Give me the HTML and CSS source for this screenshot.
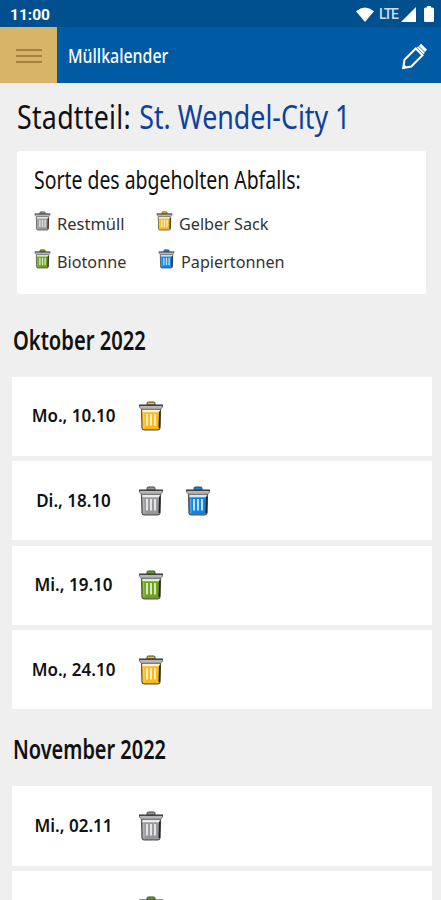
FILE: index.html
```html
<!DOCTYPE html>
<html lang="de">
<head>
<meta charset="utf-8">
<title>Müllkalender</title>
<link rel="stylesheet" href="styles.css">
</head>
<body>
<svg class="defs" aria-hidden="true">
  <symbol id="bin" viewBox="0 0 26 30">
    <path d="M9 4V2.200Q9 1 10.300 1h5.400Q17 1 17 2.200V4z" fill="currentColor" stroke="#444" stroke-width="1"/>
    <path d="M3.500 8.500h19L22 27q-.1 1.800-2 1.800H6q-1.900 0-2-1.800z" fill="currentColor" stroke="#555" stroke-width="1.200"/>
    <path d="M4.300 8.500h17.400v2.800h-17.400z" fill="#fff" opacity=".8"/>
    <path d="M5.700 12.500l.3 14.500" stroke="#fff" stroke-width="1" opacity=".4"/>
    <path d="M21.800 10.500L21.300 27" stroke="#222" stroke-width="1.600"/>
    <path d="M9 13v11.500M13 13v11.500M17 13v11.500" stroke="#fff" stroke-width="2.100" opacity=".75"/>
    <path d="M1.500 4.200h23v2.100l-2.200 1.900H3.700L1.500 6.300z" fill="#b4b6ba" stroke="#666" stroke-width=".9"/>
    <path d="M1 4.200h24" stroke="#333" stroke-width="1.200"/>
  </symbol>
</svg>

<div class="status">
  <span class="clock">11:00</span>
  <svg class="wifi" viewBox="0 0 18 15"><path d="M0 4.200Q9-3.200 18 4.200L9 15z"/></svg>
  <span class="lte">LTE</span>
  <svg class="signal" viewBox="0 0 15 15"><path d="M15 0v15H0z"/></svg>
  <svg class="battery" viewBox="0 0 10 16"><path d="M3 0h4v1.500h1.500Q10 1.500 10 3v11.500Q10 16 8.500 16h-7Q0 16 0 14.500V3Q0 1.500 1.500 1.500H3z"/></svg>
</div>

<header class="bar">
  <div class="menu"><i></i><i></i><i></i></div>
  <span class="bar-title">Müllkalender</span>
  <svg class="pencil" viewBox="0 0 27 27">
    <path d="M2.200 25l1.300-8.200L14.800 5.500l6.700 6.700L10.200 23.500z"/>
    <path class="solid" d="M2 25.200l.7-4.400 3.700 3.700z"/>
    <path d="M16.600 3.900l6.600 6.600"/>
    <path class="end" d="M19 1.900l6 6"/>
  </svg>
</header>

<main>
  <h1><span class="district">Stadtteil: <b>St. Wendel-City 1</b></span></h1>

  <section class="legend">
    <h2><span>Sorte des abgeholten Abfalls:</span></h2>
    <div class="legend-row">
      <div class="kind first"><svg class="gray"><use href="#bin"/></svg><span class="slightly-wide">Restmüll</span></div>
      <div class="kind"><svg class="yellow"><use href="#bin"/></svg><span>Gelber Sack</span></div>
    </div>
    <div class="legend-row">
      <div class="kind first wide"><svg class="green"><use href="#bin"/></svg><span>Biotonne</span></div>
      <div class="kind"><svg class="blue"><use href="#bin"/></svg><span>Papiertonnen</span></div>
    </div>
  </section>

  <h3><span class="okt">Oktober 2022</span></h3>
  <div class="days">
    <div class="day"><time>Mo., 10.10</time><svg class="yellow"><use href="#bin"/></svg></div>
    <div class="day"><time>Di., 18.10</time><svg class="gray"><use href="#bin"/></svg><svg class="blue"><use href="#bin"/></svg></div>
    <div class="day"><time>Mi., 19.10</time><svg class="green"><use href="#bin"/></svg></div>
    <div class="day"><time>Mo., 24.10</time><svg class="yellow"><use href="#bin"/></svg></div>
  </div>

  <h3><span class="nov">November 2022</span></h3>
  <div class="days">
    <div class="day"><time>Mi., 02.11</time><svg class="gray"><use href="#bin"/></svg></div>
    <div class="day"><time></time><svg class="green"><use href="#bin"/></svg></div>
  </div>
</main>
</body>
</html>
```
FILE: styles.css
```css
* { box-sizing: border-box; }
html, body { margin: 0; height: 900px; overflow: hidden; }
body {
  background: #efefef;
  color: #111;
  font-family: "Noto Sans", "Open Sans", sans-serif;
}
main { height: 817px; overflow: hidden; }
svg { display: block; flex: none; }
.defs { position: absolute; width: 0; height: 0; }

.gray { color: #98989c; }
.yellow { color: #fbb914; }
.green { color: #6aa315; }
.blue { color: #0b83e8; }

.status {
  display: flex;
  align-items: center;
  height: 27px;
  padding: 1px 7px 0 10px;
  background: #004f8e;
  color: #fff;
}
.status svg { fill: #fff; }
.clock {
  margin: 2px auto 0 0;
  font: 700 15.500px/26px Roboto, sans-serif;
}
.wifi { width: 18px; height: 15px; margin-right: 5px; }
.lte {
  width: 20px;
  margin-right: 2px;
  font: 500 14px/26px Roboto, sans-serif;
  letter-spacing: -1.200px;
  color: #cfdfef;
}
.signal { width: 15px; height: 15px; margin-right: 8px; }
.battery { width: 10px; height: 16px; }

.bar {
  display: flex;
  align-items: center;
  height: 56px;
  padding-right: 13px;
  background: #005ba4;
  color: #fff;
}
.menu {
  display: flex;
  flex-direction: column;
  align-items: center;
  justify-content: center;
  gap: 4px;
  width: 57px;
  height: 56px;
  padding-top: 1px;
  background: #d7b468;
}
.menu i { width: 26px; height: 2px; background: #a3823f; }
.bar-title {
  margin: 2px auto 0 11px;
  font-size: 20px;
  font-weight: 500;
  line-height: 28px;
  transform: scaleX(.795);
  transform-origin: left;
}
.pencil { width: 27px; height: 27px; margin-top: 2px; fill: none; stroke: #fff; stroke-width: 2; }
.pencil .solid { fill: #fff; stroke: none; }
.pencil .end { stroke-width: 3; }

h1, h2, h3 { margin: 0; font-weight: 400; white-space: nowrap; }
h1 span, h2 span, h3 span, .kind span { display: inline-block; transform-origin: left; white-space: nowrap; }
h1 { height: 68px; padding: 12px 0 0 17px; font-size: 33px; line-height: 44px; }
h1 span { letter-spacing: .3px; transform: scaleX(.812); }
h1 b { margin-left: 1.500px; font-weight: 400; letter-spacing: 0; color: #0d419c; }

.legend {
  height: 143px;
  margin: 0 15px 0 17px;
  padding: 11px 17px 0;
  background: #fff;
  border-radius: 2px;
}
h2 { height: 42px; font-size: 25px; line-height: 34px; }
h2 span { transform: scaleX(.777); }
.legend-row { display: flex; height: 37.500px; }
.kind { display: flex; height: 37px; padding-top: 7px; }
.kind svg { width: 17px; height: 20px; margin-right: 6px; }
.kind span { font-size: 16px; line-height: 24px; margin-top: 1px; color: #333; transform: scaleX(1.012); }
.kind .slightly-wide { transform: scaleX(1.03); }
.first { width: 122px; }
.wide { width: 124px; }

h3 {
  height: 82.700px;
  padding: 26px 0 0 13px;
  font-size: 27px;
  font-weight: 600;
  line-height: 40px;
}
h3 .okt { transform: scaleX(.746); }
h3 .nov { transform: scaleX(.738); }
.days + h3 { height: 77px; padding-top: 20px; }

.days { display: flex; flex-direction: column; gap: 5.200px; padding: 0 9px 0 12px; }
.day {
  display: flex;
  align-items: center;
  flex: none;
  height: 79.300px;
  background: #fff;
}
.day time {
  width: 123px;
  margin-right: 3px;
  text-align: center;
  font-size: 17px;
  font-weight: 600;
  line-height: 24px;
}
.day svg { width: 26px; height: 30px; margin-right: 21px; }
```
